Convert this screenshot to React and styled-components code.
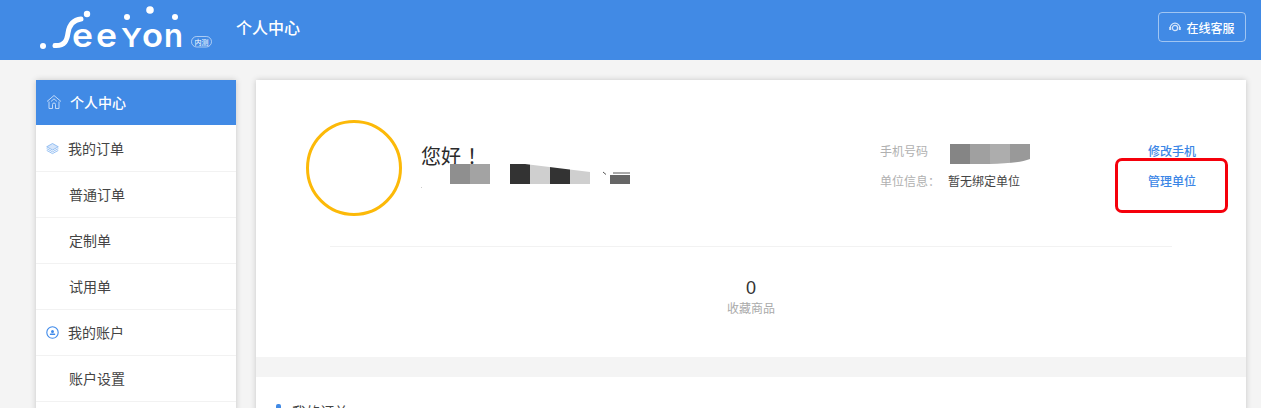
import React from 'react';
import styled, { createGlobalStyle } from 'styled-components';

const Global = createGlobalStyle`
html, body {
  margin: 0;
  padding: 0;
  background: #f4f4f4;
  overflow: hidden;
  font-family: "Noto Sans CJK SC", "Liberation Sans", sans-serif;
}
`;

const Header = styled.header`
height: 60px;
background: #418ae5;
display: flex;
align-items: center;
padding: 0 15px 0 36px;
color: #fff;
`;

const HeaderTitle = styled.div`
margin-left: 24px;
font-size: 16px;
font-weight: 500;
padding-bottom: 7px;
`;

const ServiceButton = styled.div`
margin-left: auto;
width: 88px;
height: 30px;
box-sizing: border-box;
display: flex;
align-items: center;
justify-content: center;
gap: 5px;
border: 1px solid rgba(255, 255, 255, 0.5);
border-radius: 4px;
font-size: 12px;
font-weight: 500;
margin-top: -6px;
`;

const Page = styled.div`
display: flex;
align-items: flex-start;
gap: 20px;
padding: 20px 15px 0 36px;
`;

const Sidebar = styled.nav`
width: 200px;
flex: none;
background: #fff;
box-shadow: 0 0 6px rgba(0, 0, 0, 0.18);
`;

const NavItem = styled.div`
height: ${p => p.$active ? '45px' : '46px'};
box-sizing: border-box;
display: flex;
align-items: center;
gap: ${p => p.$active ? '8px' : '9px'};
padding-left: ${p => p.$child ? '33px' : '10px'};
padding-bottom: ${p => p.$active ? '2px' : '1px'};
margin-bottom: ${p => p.$active ? '1px' : '0'};
font-size: 14px;
color: ${p => p.$active ? '#fff' : '#444'};
font-weight: ${p => p.$active ? 500 : 400};
background: ${p => p.$active ? '#418ae5' : '#fff'};
border-bottom: ${p => p.$active ? 'none' : '1px solid #f2f2f2'};
`;

const Main = styled.main`
position: relative;
width: 990px;
flex: none;
background: #fff;
box-shadow: 0 0 6px rgba(0, 0, 0, 0.18);
`;

const Profile = styled.section`
display: flex;
align-items: flex-start;
height: 166px;
box-sizing: border-box;
padding: 40px 0 0 50px;
`;

const Avatar = styled.div`
width: 96px;
height: 96px;
box-sizing: border-box;
flex: none;
border: 3px solid #fcb908;
border-radius: 50%;
`;

const Greeting = styled.div`
margin-left: 19px;
width: 459px;
flex: none;
padding-top: 22px;
`;

const Hello = styled.div`
font-size: 20px;
line-height: 28px;
color: #2b2b2b;
`;

const Bang = styled.span`
margin-left: 6px;
`;

const Mosaic = styled.svg`
display: block;
margin-top: -6px;
`;

const Info = styled.div`
width: 268px;
flex: none;
padding-top: 15px;
`;

const InfoRow = styled.div`
display: flex;
align-items: center;
height: 30px;
font-size: 12px;
`;

const InfoLabel = styled.span`
width: 68px;
flex: none;
color: #b0b0b0;
`;

const InfoValue = styled.span`
color: #444;
`;

const PhoneBlock = styled.svg`
display: block;
margin: 8px 0 0 2px;
`;

const Links = styled.div`
padding-top: 15px;
`;

const LinkRow = styled.div`
height: 30px;
display: flex;
align-items: center;
font-size: 12px;
font-weight: 500;
color: #3b86e6;
`;

const Divider = styled.div`
height: 1px;
margin: 0 74px;
background: #f2f2f2;
`;

const Stats = styled.div`
height: 110px;
box-sizing: border-box;
padding-top: 29px;
display: flex;
flex-direction: column;
align-items: center;
`;

const StatValue = styled.div`
font-size: 18px;
line-height: 24px;
color: #333;
font-family: "Liberation Sans", sans-serif;
`;

const StatLabel = styled.div`
font-size: 12px;
line-height: 16px;
color: #aaa;
`;

const Band = styled.div`
height: 20px;
background: #f4f4f4;
`;

const SectionTitle = styled.div`
display: flex;
align-items: center;
gap: 11px;
margin: 24px 0 0 20px;
font-size: 14px;
line-height: 20px;
color: #444;
&::before {
  content: "";
  width: 5px;
  height: 14px;
  border-radius: 2px;
  background: #418ae5;
}
`;

const Annotation = styled.div`
position: absolute;
left: 859px;
top: 78px;
width: 113px;
height: 55px;
box-sizing: border-box;
border: 3px solid #f5000b;
border-radius: 7px;
`;

const letters = [
  { ch: 'e', x: 36, w: 21, size: 33 },
  { ch: 'e', x: 60, w: 21, size: 33 },
  { ch: 'Y', x: 85, w: 21, size: 25 },
  { ch: 'o', x: 106, w: 21, size: 33 },
  { ch: 'n', x: 128, w: 19, size: 33 },
];

const Logo = () => (
  <svg width="176" height="50" viewBox="0 0 176 50" style={{ flex: 'none' }}>
    <g fill="#fff">
      <circle cx="7" cy="41" r="3" />
      <circle cx="51" cy="9" r="3.2" />
      <circle cx="91" cy="12" r="3" />
      <circle cx="114" cy="5" r="3.8" />
      <circle cx="139" cy="12" r="3" />
    </g>
    <path d="M19 40.5 C29 41 31 35 32 28 C33 21 36 15 45 14" fill="none" stroke="#fff" strokeWidth="5" strokeLinecap="round" />
    {letters.map((l, i) => (
      <text key={i} x={l.x} y="42" fill="#fff" fontFamily="Inter, sans-serif" fontWeight="600" fontSize={l.size} textLength={l.w} lengthAdjust="spacingAndGlyphs">
        {l.ch}
      </text>
    ))}
    <rect x="155.5" y="31.5" width="20" height="10.5" rx="5.2" fill="none" stroke="rgba(255,255,255,0.7)" strokeWidth="0.8" />
    <text x="165.5" y="39.5" fill="#fff" fontSize="7" textAnchor="middle">内测</text>
  </svg>
);

const HomeIcon = () => (
  <svg width="16" height="16" viewBox="0 0 16 16" fill="none" stroke="#cfe2fa" strokeWidth="0.9">
    <path d="M1 7.5 8 1.5l7 6" />
    <path d="M3 7.5V14.5h3.5V10.5a1.5 1.5 0 0 1 3 0V14.5H13V7.5" />
    <path d="M5 7.5 8 4.8l3 2.7" />
  </svg>
);

const LayersIcon = () => (
  <svg width="13" height="13" viewBox="0 0 13 13" fill="none" stroke="#7fb2f0" strokeWidth="0.8">
    <path d="M6.5 1.5 12.3 4.8 6.5 8 .7 4.8z" fill="#d5e5fa" />
    <path d="M.7 6.6 6.5 9.8 12.3 6.6" />
    <path d="M.7 8.4 6.5 11.6 12.3 8.4" />
  </svg>
);

const UserIcon = () => (
  <svg width="13" height="13" viewBox="0 0 13 13">
    <circle cx="6.5" cy="6.5" r="5.7" fill="none" stroke="#3f8aea" strokeWidth="1.1" />
    <circle cx="6.5" cy="5.4" r="1.5" fill="#3f8aea" />
    <rect x="3.8" y="7.6" width="5.4" height="1.5" rx="0.7" fill="#3f8aea" />
  </svg>
);

const HeadsetIcon = () => (
  <svg width="12" height="11" viewBox="0 0 12 11" fill="none" stroke="#d5e5fa">
    <path d="M1.2 6a4.8 4.8 0 0 1 9.6 0" strokeWidth="1.2" />
    <circle cx="6" cy="6" r="2.6" strokeWidth="1.2" />
    <path d="M1.2 5v3M10.8 5v3" strokeWidth="2" />
  </svg>
);

// redacted name and phone blocks in the reference
const NameMosaic = () => (
  <Mosaic width="210" height="24" viewBox="0 0 210 24">
    <rect x="29" y="0" width="20" height="20" fill="#8f8f8f" />
    <rect x="49" y="0" width="20" height="20" fill="#a3a3a3" />
    <rect x="89" y="0" width="20" height="20" fill="#333" />
    <rect x="109" y="0" width="20" height="20" fill="#cfcfcf" />
    <rect x="129" y="0" width="20" height="20" fill="#333" />
    <rect x="149" y="0" width="20" height="20" fill="#cfcfcf" />
    <rect x="189" y="11" width="20" height="9" fill="#666" />
    <path d="M104 0 169 8V0z" fill="#fff" />
    <path d="M182 8l3 2.5M192 9h17" stroke="#555" strokeWidth="1" fill="none" />
    <rect x="0" y="23" width="1" height="1" fill="#ccc" />
  </Mosaic>
);

const PhoneMosaic = () => (
  <PhoneBlock width="80" height="20" viewBox="0 0 80 20">
    <rect x="0" y="0" width="20" height="20" fill="#858585" />
    <rect x="20" y="0" width="20" height="20" fill="#a0a0a0" />
    <rect x="40" y="0" width="20" height="20" fill="#adadad" />
    <rect x="60" y="0" width="20" height="20" fill="#999" />
    <path d="M40 20H80V15C70 19 55 19 40 20z" fill="#fff" />
  </PhoneBlock>
);

const navItems = [
  { label: '我的订单', icon: <LayersIcon /> },
  { label: '普通订单', child: true },
  { label: '定制单', child: true },
  { label: '试用单', child: true },
  { label: '我的账户', icon: <UserIcon /> },
  { label: '账户设置', child: true },
  { label: '收货地址', child: true },
];

export default function App() {
  return (
    <>
      <Global />
      <Header>
        <Logo />
        <HeaderTitle>个人中心</HeaderTitle>
        <ServiceButton>
          <HeadsetIcon />
          在线客服
        </ServiceButton>
      </Header>
      <Page>
        <Sidebar>
          <NavItem $active>
            <HomeIcon />
            个人中心
          </NavItem>
          {navItems.map(item => (
            <NavItem key={item.label} $child={item.child}>
              {item.icon}
              {item.label}
            </NavItem>
          ))}
        </Sidebar>
        <Main>
          <Profile>
            <Avatar />
            <Greeting>
              <Hello>您好<Bang>！</Bang></Hello>
              <NameMosaic />
            </Greeting>
            <Info>
              <InfoRow>
                <InfoLabel>手机号码</InfoLabel>
                <PhoneMosaic />
              </InfoRow>
              <InfoRow>
                <InfoLabel>单位信息：</InfoLabel>
                <InfoValue>暂无绑定单位</InfoValue>
              </InfoRow>
            </Info>
            <Links>
              <LinkRow>修改手机</LinkRow>
              <LinkRow>管理单位</LinkRow>
            </Links>
          </Profile>
          <Divider />
          <Stats>
            <StatValue>0</StatValue>
            <StatLabel>收藏商品</StatLabel>
          </Stats>
          <Band />
          <SectionTitle>我的订单</SectionTitle>
          <Annotation />
        </Main>
      </Page>
    </>
  );
}
